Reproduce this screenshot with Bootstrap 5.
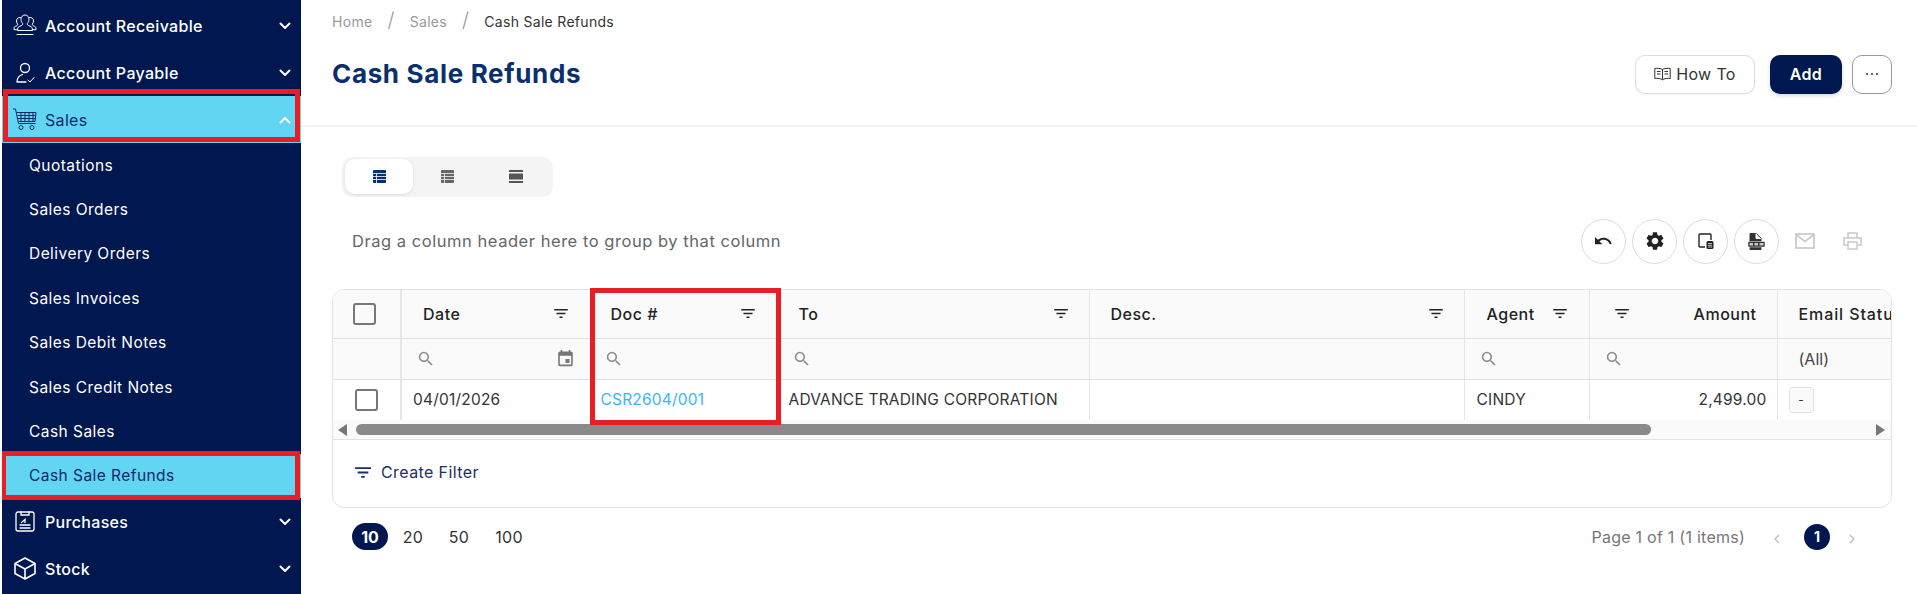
<!DOCTYPE html>
<html lang="en"><head><meta charset="utf-8"><title>Cash Sale Refunds</title>
<link href="https://cdn.jsdelivr.net/npm/bootstrap@5.3.0/dist/css/bootstrap.min.css" rel="stylesheet">
<style>
html,body{height:594px;overflow:hidden}
body{font-family:Inter,"Liberation Sans",sans-serif;font-size:15px;color:#333;background:#fff}
.shell{height:594px}
.side{width:299px;margin-left:2px;background:#00174f;padding-top:2px;flex:none;height:594px;overflow:hidden}
.side-top{height:47px;color:#fff;padding:1px 10px 0 11px;font-size:16px;font-weight:500;letter-spacing:.32px;position:relative}
.side-top .glyph{width:24px;height:24px;margin-right:8px;flex:none}
.side-top .chev{margin-left:auto;width:12px;height:8px}
.side-top.on{background:#62d4f4;color:#0b2a66;font-weight:400}
.side-sub{height:44.4px;color:#fff;padding:0 0 0 27px;font-size:15.5px;font-weight:400;letter-spacing:.45px;position:relative}
.side-sub.on{background:#62d4f4;color:#0b2a66;font-weight:400}
.redbox{position:absolute;border:5px solid #e81e25;pointer-events:none;z-index:3}
.rb-sales{left:1px;right:1px;top:-7px;bottom:1px}
.rb-refund{left:-1px;right:1px;top:-3px;bottom:-2px}
.rb-doc{left:590px;top:288px;width:191px;height:137px}
.page-main{min-width:0;flex:1 1 0;height:594px;overflow:hidden}
.top-head{height:127px;border-bottom:2px solid #f3f3f3;padding:0 25px 0 31px}
.crumbs{font-size:14px;letter-spacing:.3px;height:42px;margin:0;--bs-breadcrumb-divider:"/";--bs-breadcrumb-margin-bottom:0;--bs-breadcrumb-item-padding-x:15px}
.crumbs .breadcrumb-item{color:#999}
.crumbs .breadcrumb-item+.breadcrumb-item::before{color:#999;font-size:20px;line-height:18px;font-weight:300}
.crumbs .breadcrumb-item.active{color:#333}
.page-title{font-size:26px;font-weight:700;color:#0a2f6f;margin:0;letter-spacing:.66px;line-height:40px}
.head-row{margin-top:12px}
.act{height:39px;border-radius:10px;font-size:16px;display:inline-flex;align-items:center;justify-content:center;padding:0}
.act-how{width:120px;border:1px solid #ddd;color:#333;background:#fff;gap:5px;letter-spacing:.35px;box-shadow:0 1px 3px rgba(0,0,0,.05)}
.act-add{width:72px;background:#00174f;color:#fff;font-weight:600;letter-spacing:.3px;margin-left:15px;border:0;box-shadow:0 2px 4px rgba(0,0,0,.15)}
.act-more{width:40px;border:1px solid #999;background:#fff;margin-left:10px}
.body-wrap{padding:30px 25px 0 31px}
.view-tog{width:211px;height:40px;margin-left:10px;background:#f4f4f4;border-radius:10px;padding:2px 3px}
.view-tog span{flex:1;display:flex;align-items:center;justify-content:center;height:35px;border-radius:10px}
.view-tog span.on{background:#fff;box-shadow:0 1px 3px rgba(0,0,0,.1)}
.group-row{height:44px;margin:22px 0 26px;padding:0 30px 0 20px}
.group-txt{font-size:16.5px;color:#666;letter-spacing:.54px}
.round{width:45px;height:45px;border-radius:50%;border:1px solid #ddd;background:#fff;margin-right:6px;padding:0;flex:none;display:flex;align-items:center;justify-content:center}
.tool-print{margin-left:28px}
.grid-box{border:1px solid #e2e2e2;border-radius:12px;height:219px;overflow:hidden}
.grid-clip{height:130px;overflow:hidden}
.table.grid-t{table-layout:fixed;width:1645px;margin:0;font-size:15.5px;border-collapse:collapse}
.table.grid-t>*>*>*{padding:0;vertical-align:middle;border-bottom:1px solid #e0e0e0;border-right:1px solid #e6e6e6;box-shadow:none;white-space:nowrap}
.table.grid-t tr.hrow>*{height:48px;background:#fafafa;font-weight:500;font-size:16px;color:#222;letter-spacing:.5px}
.table.grid-t tr.frow>*{height:41px;background:#fafafa;color:#444;font-weight:400;font-size:16px}
.table.grid-t tr.drow>*{height:41px;border-bottom:0;color:#333;font-weight:400;letter-spacing:.2px}
.table.grid-t>*>*>*:first-child{border-right:2px solid #e6e6e6}
.c1{width:68px}.c2{width:189px}.c3{width:190px}.c4{width:309px}.c5{width:375px}.c6{width:125px}.c7{width:188px}.c8{width:201px}
.cell{padding-left:21px;padding-right:20px}
.cell-mail{letter-spacing:.9px}
.h-date{padding-right:21px}
.h-doc{padding-left:20px;padding-right:24px}
.h-to{padding-left:18px}
.h-agent{padding-left:22px;padding-right:21px}
.h-amt{padding-left:24px}
.cellf{padding-left:16px;padding-right:17px}
.f-doc{padding-left:15px}
.f-to{padding-left:13px}
.celld{padding-left:11px;padding-right:10px}
.d-doc{padding-left:10px}
.d-to{padding-left:8px}
.d-agent{padding-left:12px}
.chk{display:block;border:2px solid #777;border-radius:3px;width:23px;height:22px;margin-left:20px}
.chk-row{margin-left:22px}
.dash{display:inline-flex;width:25px;height:26px;border:1px solid #e2e2e2;border-radius:3px;align-items:center;justify-content:center;font-size:12px;background:#fafafa}
.doclink{color:#3ab4ff;text-decoration:none}
.scr{background:#fafafa;border-bottom:1px solid #e2e2e2;padding:0 6px 0 5px;gap:8px;box-sizing:content-box;height:19px}
.scr-track{flex:1}
.scr-thumb{width:1295px;height:11px;border-radius:6px;background:#8a8a8a}
.create{height:64px;padding-left:22px;font-size:16px;color:#1a2f66;gap:10px;letter-spacing:.4px}
.create svg{color:#1a2f66}
.pager{margin-top:15px;padding:0 37px 0 20px;height:27px}
.pill-on{background:#00174f;color:#fff;font-weight:700;border-radius:14px;width:36px;height:27px;display:flex;align-items:center;justify-content:center;font-size:16px}
.size-n{margin-left:18px;font-size:16px;width:28px;text-align:center;color:#333;letter-spacing:.3px}
.size-n.wide{width:36px;margin-left:18px}
.size-n.first{margin-left:11px}
.pageinfo{font-size:16px;color:#777;letter-spacing:.25px}
.pg-prev{margin:4px 0 0 29px}
.pg-next{margin:4px 0 0 19px}
.pg-one{width:26px;height:26px;margin-left:24px;border-radius:50%;background:#00174f;color:#fff;font-weight:700;display:flex;align-items:center;justify-content:center;font-size:14px}
</style></head>
<body>
<svg width="0" height="0" class="d-none"><defs>
<symbol id="i-filter" viewBox="3 6 18 12"><path d="M10 18h4v-2h-4v2zM3 6v2h18V6H3zm3 7h12v-2H6v2z" fill="currentColor"/></symbol>
<symbol id="i-search" viewBox="2 2 19 19"><path d="M15.5 14h-.79l-.28-.27A6.471 6.471 0 0 0 16 9.5 6.5 6.5 0 1 0 9.5 16c1.61 0 3.09-.59 4.23-1.57l.27.28v.79l5 4.99L20.49 19l-4.99-5zm-6 0C7.01 14 5 11.99 5 9.5S7.01 5 9.5 5 14 7.01 14 9.5 11.99 14 9.5 14z" fill="#8c8c8c"/></symbol>
<symbol id="i-down" viewBox="0 0 12 8"><path d="M1.5 1.5 6 6l4.5-4.5" fill="none" stroke="#fff" stroke-width="2" stroke-linecap="round" stroke-linejoin="round"/></symbol>
<symbol id="i-up" viewBox="0 0 12 8"><path d="M1.5 6.5 6 2l4.5 4.5" fill="none" stroke="#fff" stroke-width="2" stroke-linecap="round" stroke-linejoin="round"/></symbol>
</defs></svg>
<div class="shell d-flex">
<nav class="side d-flex flex-column">
  <div class="side-top d-flex align-items-center"><svg class="glyph" viewBox="0 0 24 24" fill="none" stroke="#fff" stroke-width="1"><path d="M12 1c-2.600 0-4 2-4 4.300 0 1.700.7 3.200 1.600 4.100.4 1-.2 1.800-1.500 2.300-1.500.6-3 1.200-3.300 2.400l-.3 2.400h15l-.3-2.400c-.3-1.200-1.800-1.800-3.300-2.400-1.300-.5-1.900-1.300-1.500-2.300.9-.9 1.600-2.400 1.600-4.100C16 3 14.600 1 12 1z"/><path d="M7.500 3.500C5.500 3 3.500 4.500 3.500 7c0 1.300.5 2.400 1.200 3.100.2.900-.3 1.400-1.300 1.800-1.100.4-2.100.9-2.300 1.800l-.1 2h3.500M16.500 3.500c2-.5 4 1 4 3.500 0 1.300-.5 2.400-1.200 3.100-.2.900.3 1.400 1.300 1.800 1.100.4 2.100.9 2.300 1.800l.1 2H19.500M4 20.500h16" stroke-linecap="round"/></svg>Account Receivable<svg class="chev"><use href="#i-down"/></svg></div>
  <div class="side-top d-flex align-items-center"><svg class="glyph" viewBox="0 0 24 24" fill="none" stroke="#fff" stroke-width="1.300"><circle cx="12" cy="7" r="4.500"/><path d="M4 21c0-3 1-6 5.500-7.500M4 21h9" stroke-linecap="round"/><path d="M15 19l2 2 4-4.500" stroke-linecap="round" stroke-width="1"/></svg>Account Payable<svg class="chev"><use href="#i-down"/></svg></div>
  <div class="side-top on d-flex align-items-center"><svg class="glyph" viewBox="0 0 24 24" fill="none" stroke="#0b2a66" stroke-width="1"><path d="M0 1h2.500l3 14.500h17"/><path d="M3.500 4.500h19.500l-1 9h-16.500M8 4.500v9M12 4.500v9M16 4.500v9M20 4.500v9M4.500 7.500h18M5 10.500h17.500"/><circle cx="8" cy="19.500" r="2"/><circle cx="19" cy="19.500" r="2"/></svg>Sales<svg class="chev"><use href="#i-up"/></svg><span class="redbox rb-sales"></span></div>
  <div class="side-sub d-flex align-items-center">Quotations</div>
  <div class="side-sub d-flex align-items-center">Sales Orders</div>
  <div class="side-sub d-flex align-items-center">Delivery Orders</div>
  <div class="side-sub d-flex align-items-center">Sales Invoices</div>
  <div class="side-sub d-flex align-items-center">Sales Debit Notes</div>
  <div class="side-sub d-flex align-items-center">Sales Credit Notes</div>
  <div class="side-sub d-flex align-items-center">Cash Sales</div>
  <div class="side-sub on d-flex align-items-center">Cash Sale Refunds<span class="redbox rb-refund"></span></div>
  <div class="side-top d-flex align-items-center"><svg class="glyph" viewBox="0 0 24 24" fill="none" stroke="#fff" stroke-width="1.300"><rect x="3" y="2" width="18" height="19" rx="2"/><path d="M8 2v3h8V2M7 15h10M7 18h10M8.500 12.500l3.500-3v3" stroke-linecap="round"/></svg>Purchases<svg class="chev"><use href="#i-down"/></svg></div>
  <div class="side-top d-flex align-items-center"><svg class="glyph" viewBox="0 0 24 24" fill="none" stroke="#fff" stroke-width="1.600" stroke-linejoin="round"><path d="M12 1 22 6.500v10L12 22 2 16.500v-10zM2 6.500 12 12l10-5.500M12 12v10"/></svg>Stock<svg class="chev"><use href="#i-down"/></svg></div>
</nav>
<main class="page-main">
  <header class="top-head">
    <ol class="breadcrumb crumbs align-items-center"><li class="breadcrumb-item">Home</li><li class="breadcrumb-item">Sales</li><li class="breadcrumb-item active">Cash Sale Refunds</li></ol>
    <div class="d-flex align-items-center justify-content-between head-row">
      <h1 class="page-title">Cash Sale Refunds</h1>
      <div class="d-flex align-items-center">
        <button class="btn act act-how"><svg width="17" height="14" viewBox="0 0 17 14" fill="none" stroke="#333" stroke-width="1"><path d="M8.500 2.500C7 1.500 3 1 .8 1.500v10C3 11 7 11.500 8.500 12.800 10 11.500 14 11 16.200 11.500v-10C14 1 10 1.500 8.500 2.500zM8.500 2.500v10M3 4.500h3.500M3 7h3.500M10.500 4.500H14M10.500 7H14"/></svg>How To</button>
        <button class="btn act act-add">Add</button>
        <button class="btn act act-more"><svg width="14" height="4" viewBox="0 0 14 4" fill="#333"><circle cx="2" cy="2" r="1"/><circle cx="7" cy="2" r="1"/><circle cx="12" cy="2" r="1"/></svg></button>
      </div>
    </div>
  </header>
  <div class="body-wrap">
    <div class="view-tog d-flex">
      <span class="on"><svg width="13" height="13" viewBox="0 0 13 13"><rect width="13" height="13" rx="1" fill="#0a2f6f"/><path d="M0 3.500h13M0 6.500h13M0 9.500h13M3.500 3.500V13" stroke="#fff" stroke-width=".8"/></svg></span>
      <span><svg width="13" height="13" viewBox="0 0 13 13"><rect width="13" height="13" rx="1" fill="#666"/><path d="M0 3.500h13M0 6.500h13M0 9.500h13M3.500 3.500V13" stroke="#f4f4f4" stroke-width=".8"/></svg></span>
      <span><svg width="14" height="13" viewBox="0 0 14 13" fill="#555"><rect width="14" height="2"/><rect y="3.500" width="14" height="6"/><rect y="11" width="14" height="2"/></svg></span>
    </div>
    <div class="group-row d-flex align-items-center">
      <div class="group-txt flex-grow-1">Drag a column header here to group by that column</div>
      <button class="btn round"><svg width="18" height="18" viewBox="2 2 22 20"><path d="M12.500 8c-2.650 0-5.050.99-6.900 2.600L2 7v9h9l-3.620-3.620c1.390-1.160 3.160-1.880 5.120-1.880 3.540 0 6.550 2.310 7.600 5.500l2.370-.78C21.080 11.030 17.150 8 12.500 8z" fill="#222"/></svg></button>
      <button class="btn round"><svg width="18" height="18" viewBox="2 2 20 20"><path d="M19.140 12.940c.04-.3.06-.61.06-.94 0-.32-.02-.64-.07-.94l2.030-1.580a.49.49 0 0 0 .12-.61l-1.920-3.320a.488.488 0 0 0-.59-.22l-2.390.96c-.5-.38-1.030-.7-1.620-.94l-.36-2.540a.484.484 0 0 0-.48-.41h-3.840c-.24 0-.43.17-.47.41l-.36 2.540c-.59.24-1.130.57-1.620.94l-2.390-.96c-.22-.08-.47 0-.59.22L2.740 8.870c-.12.21-.08.47.12.61l2.030 1.580c-.05.3-.09.63-.09.94s.02.64.07.94l-2.030 1.580a.49.49 0 0 0-.12.61l1.920 3.320c.12.22.37.29.59.22l2.390-.96c.5.38 1.030.7 1.620.94l.36 2.540c.05.24.24.41.48.41h3.840c.24 0 .44-.17.47-.41l.36-2.540c.59-.24 1.130-.56 1.620-.94l2.390.96c.22.08.47 0 .59-.22l1.920-3.320c.12-.22.07-.47-.12-.61l-2.010-1.580zM12 15.600c-1.980 0-3.600-1.620-3.600-3.600s1.620-3.600 3.600-3.600 3.600 1.620 3.600 3.600-1.620 3.600-3.600 3.600z" fill="#222"/></svg></button>
      <button class="btn round"><svg width="16" height="16" viewBox="0 0 16 16" fill="none"><path d="M7 14H2a1 1 0 0 1-1-1V2a1 1 0 0 1 1-1h10a1 1 0 0 1 1 1v5" stroke="#222" stroke-width="1.400"/><rect x="8.500" y="8" width="7" height="8" rx="1.500" fill="#222"/><path d="M10 10.500h4M10 12.300h4M10 14h4" stroke="#fff" stroke-width=".7"/></svg></button>
      <button class="btn round me-0"><svg width="17" height="17" viewBox="0 0 17 17"><path d="M2 .5h6.500L13 5v11.500H2z" fill="#333" stroke="#333"/><path d="M8 .5V5.500h5" fill="#fff" stroke="#fff"/><rect x="0" y="8.500" width="17" height="5.500" rx="1" fill="#333" stroke="#fff" stroke-width=".5"/><path d="M1.500 10h3.500v2.500H1.500zM6.500 10h3.500v2.500H6.500zM11.500 10h4v2.500h-4z" fill="#c8c8c8"/></svg></button>
      <svg class="ms-3" width="20" height="16" viewBox="0 0 20 16" fill="none" stroke="#c9c9c9" stroke-width="1.700"><rect x="1" y="1" width="18" height="14"/><path d="M1 1.500l9 7 9-7"/></svg>
      <svg class="tool-print" width="19" height="18" viewBox="0 0 19 18" fill="none" stroke="#c9c9c9" stroke-width="1.500"><path d="M5 6V1h9v5M5 13H1V6h17v7h-4"/><rect x="5" y="10" width="9" height="7"/></svg>
    </div>
    <div class="grid-box">
      <div class="grid-clip">
      <table class="table grid-t">
        <colgroup><col class="c1"><col class="c2"><col class="c3"><col class="c4"><col class="c5"><col class="c6"><col class="c7"><col class="c8"></colgroup>
        <thead>
        <tr class="hrow">
          <th><span class="chk"></span></th>
          <th><div class="cell h-date d-flex justify-content-between align-items-center">Date<svg width="16" height="9"><use href="#i-filter"/></svg></div></th>
          <th><div class="cell h-doc d-flex justify-content-between align-items-center">Doc #<svg width="16" height="9"><use href="#i-filter"/></svg></div></th>
          <th><div class="cell h-to d-flex justify-content-between align-items-center">To<svg width="16" height="9"><use href="#i-filter"/></svg></div></th>
          <th><div class="cell d-flex justify-content-between align-items-center">Desc.<svg width="16" height="9"><use href="#i-filter"/></svg></div></th>
          <th><div class="cell h-agent d-flex justify-content-between align-items-center">Agent<svg width="16" height="9"><use href="#i-filter"/></svg></div></th>
          <th><div class="cell h-amt d-flex justify-content-between align-items-center"><svg width="16" height="9"><use href="#i-filter"/></svg>Amount</div></th>
          <th><div class="cell cell-mail">Email Status</div></th>
        </tr>
        </thead>
        <tbody>
        <tr class="frow">
          <td></td>
          <td><div class="cellf d-flex justify-content-between align-items-center"><svg width="15" height="15"><use href="#i-search"/></svg><svg width="15" height="17" viewBox="3 1 18 21"><path d="M17 12h-5v5h5v-5zM16 1v2H8V1H6v2H5a2 2 0 0 0-2 2v14c0 1.100.9 2 2 2h14a2 2 0 0 0 2-2V5a2 2 0 0 0-2-2h-1V1h-2zm3 18H5V8h14v11z" fill="#777"/></svg></div></td>
          <td><div class="cellf f-doc"><svg width="15" height="15" class="d-block"><use href="#i-search"/></svg></div></td>
          <td><div class="cellf f-to"><svg width="15" height="15" class="d-block"><use href="#i-search"/></svg></div></td>
          <td></td>
          <td><div class="cellf"><svg width="15" height="15" class="d-block"><use href="#i-search"/></svg></div></td>
          <td><div class="cellf"><svg width="15" height="15" class="d-block"><use href="#i-search"/></svg></div></td>
          <td><div class="cell">(All)</div></td>
        </tr>
        <tr class="drow">
          <td><span class="chk chk-row"></span></td>
          <td><div class="celld">04/01/2026</div></td>
          <td><div class="celld d-doc"><a class="doclink" href="#">CSR2604/001</a></div></td>
          <td><div class="celld d-to">ADVANCE TRADING CORPORATION</div></td>
          <td></td>
          <td><div class="celld d-agent">CINDY</div></td>
          <td><div class="celld text-end">2,499.00</div></td>
          <td><div class="celld"><span class="dash">-</span></div></td>
        </tr>
        </tbody>
      </table>
      </div>
      <div class="scr d-flex align-items-center">
        <svg width="10" height="12" viewBox="0 0 10 12"><path d="M9 0v12L0 6z" fill="#777"/></svg>
        <div class="scr-track"><div class="scr-thumb"></div></div>
        <svg width="10" height="12" viewBox="0 0 10 12"><path d="M1 0v12l9-6z" fill="#777"/></svg>
      </div>
      <div class="create d-flex align-items-center"><svg width="16" height="11"><use href="#i-filter"/></svg>Create Filter</div>
    </div>
    <div class="pager d-flex align-items-center">
      <span class="pill-on">10</span><span class="size-n first">20</span><span class="size-n">50</span><span class="size-n wide">100</span>
      <span class="pageinfo ms-auto">Page 1 of 1 (1 items)</span>
      <svg class="pg-prev" width="6" height="10" viewBox="0 0 6 10"><path d="M5 1 1 5l4 4" fill="none" stroke="#bbb" stroke-width="1.200"/></svg>
      <span class="pg-one">1</span>
      <svg class="pg-next" width="6" height="10" viewBox="0 0 6 10"><path d="M1 1l4 4-4 4" fill="none" stroke="#bbb" stroke-width="1.200"/></svg>
    </div>
  </div>
</main>
</div>
<div class="redbox rb-doc"></div>
</body></html>
